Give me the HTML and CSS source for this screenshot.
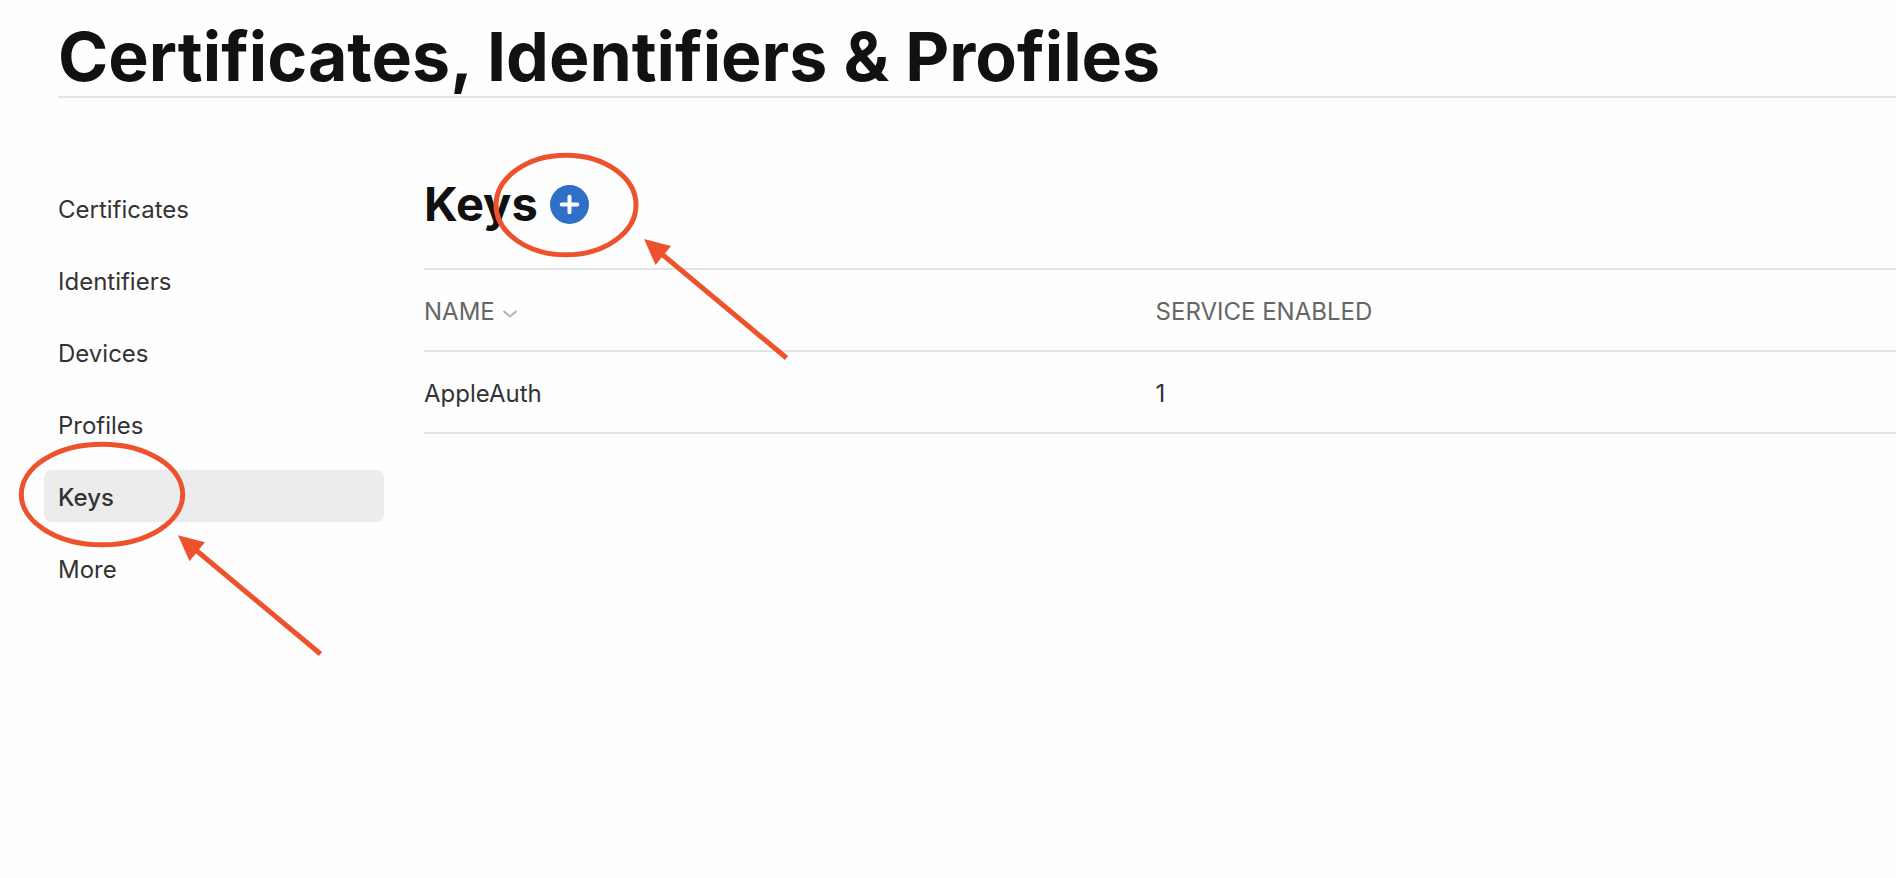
FILE: index.html
```html
<!DOCTYPE html>
<html lang="en">
<head>
<meta charset="utf-8">
<title>Certificates, Identifiers &amp; Profiles</title>
<link rel="stylesheet" href="styles.css">
</head>
<body>
<header class="page-header">
  <h1 class="page-title">Certificates, Identifiers &amp; Profiles</h1>
</header>
<div class="layout">
  <nav class="sidebar" aria-label="Resources">
    <a class="nav-link" href="#certificates">Certificates</a>
    <a class="nav-link" href="#identifiers">Identifiers</a>
    <a class="nav-link" href="#devices">Devices</a>
    <a class="nav-link" href="#profiles">Profiles</a>
    <a class="nav-link nav-link-active" href="#keys" aria-current="page">Keys</a>
    <a class="nav-link" href="#more">More</a>
  </nav>
  <main class="content">
    <div class="section-head">
      <h2 class="section-title">Keys</h2>
      <button class="add-button" type="button" aria-label="Register a new key">
        <svg class="add-icon" viewBox="0 0 39 39" aria-hidden="true"><path d="M19.5 11.7v15.6M11.7 19.5h15.6"/></svg>
      </button>
    </div>
    <table class="keys-table">
      <thead>
        <tr>
          <th class="col-name" scope="col"><button class="sort-button" type="button">NAME<svg class="sort-icon" viewBox="0 0 14 8" aria-hidden="true"><path d="M.5 1l6.500 5.500 6.500-5.500"/></svg></button></th>
          <th scope="col">SERVICE ENABLED</th>
        </tr>
      </thead>
      <tbody>
        <tr><td>AppleAuth</td><td>1</td></tr>
      </tbody>
    </table>
  </main>
</div>
<svg class="annotations" width="800" height="670" viewBox="0 0 800 670" aria-hidden="true">
  <g class="mark-line">
    <ellipse cx="566" cy="205" rx="70" ry="49.8"/>
    <path d="M660 252.5L786.5 358"/>
    <ellipse cx="102" cy="494.5" rx="80.7" ry="50.3"/>
    <path d="M194 548.5L320.5 654"/>
  </g>
  <g class="mark-head">
    <path d="M644 239l27 7-15.500 19z"/>
    <path d="M178 535.300l27 7-15.500 19z"/>
  </g>
</svg>
</body>
</html>
```
FILE: styles.css
```css
* {
  box-sizing: border-box;
}

body {
  margin: 0;
  position: relative;
  min-height: 100vh;
  background: #fefefe;
  color: #333;
  font: 400 24px/32px Inter, "Liberation Sans", sans-serif;
}

.page-header {
  margin-left: 58px;
  padding-top: 16px;
  border-bottom: 2px solid #e3e3e3;
}

.page-title {
  margin: 0;
  color: #111;
  font-size: 68px;
  font-weight: 700;
  line-height: 80px;
}

.layout {
  display: flex;
  gap: 40px;
  padding: 84px 0 0 44px;
}

.sidebar {
  flex: 0 0 340px;
  display: flex;
  flex-direction: column;
  gap: 20px;
}

.nav-link {
  padding: 12px 14px 8px;
  border-radius: 8px;
  color: #333;
  text-decoration: none;
}

.nav-link-active {
  background: #ececec;
  font-weight: 500;
}

.content {
  flex: 1;
  min-width: 0;
}

.section-head {
  display: flex;
  align-items: center;
  gap: 12px;
  height: 44px;
  margin-bottom: 42px;
}

.section-title {
  margin: 0;
  color: #111;
  font-size: 47px;
  font-weight: 700;
  line-height: 44px;
}

.add-button {
  width: 39px;
  height: 39px;
  padding: 0;
  border: 0;
  border-radius: 50%;
  background: #2d70c5;
}

.add-icon {
  display: block;
  fill: none;
  stroke: #fff;
  stroke-width: 4;
  stroke-linecap: round;
}

.keys-table {
  width: 100%;
  border-collapse: separate;
  border-spacing: 0;
  border-top: 2px solid #e3e3e3;
  table-layout: fixed;
}

.keys-table th,
.keys-table td {
  padding: 26px 0 22px;
  border-bottom: 2px solid #e3e3e3;
  text-align: left;
  font-weight: 400;
}

.keys-table th {
  color: #666;
}

.col-name {
  width: 49.7%;
}

.sort-button {
  display: flex;
  align-items: center;
  gap: 8px;
  padding: 0;
  border: 0;
  background: none;
  color: inherit;
  font: inherit;
}

.sort-icon {
  width: 14px;
  height: 8px;
  margin-top: 4px;
  fill: none;
  stroke: #b5b5b5;
  stroke-width: 2;
}

.annotations {
  position: absolute;
  top: 0;
  left: 0;
  pointer-events: none;
}

.mark-line {
  fill: none;
  stroke: #ed522d;
  stroke-width: 5;
}

.mark-head {
  fill: #ed522d;
}
```
